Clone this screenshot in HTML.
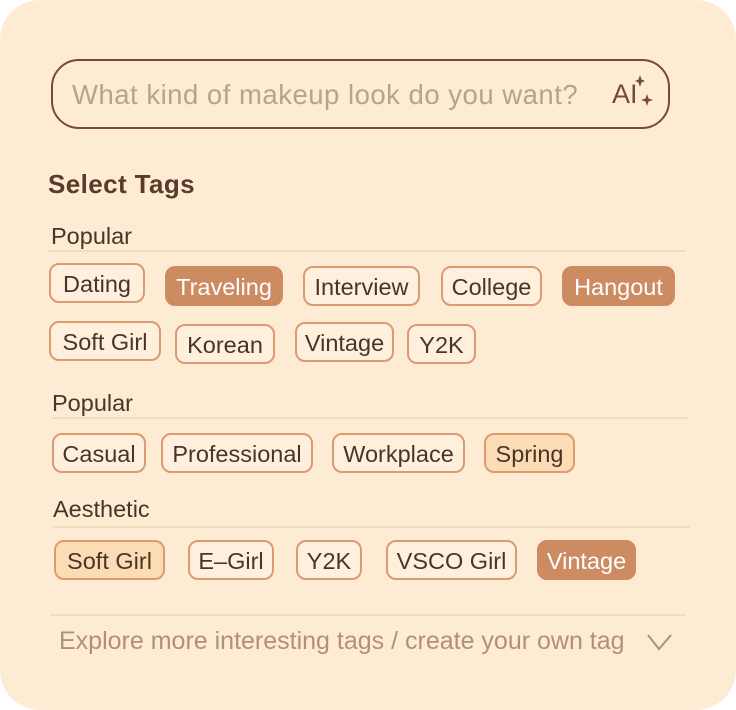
<!DOCTYPE html>
<html><head><style>
*{margin:0;padding:0;box-sizing:border-box}
body{width:736px;height:710px;background:#fff;overflow:hidden;font-family:"Liberation Sans",sans-serif}
.card{position:absolute;left:0;top:0;width:736px;height:710px;background:#feebd4;border-radius:40px}
.abs{position:absolute}
.inp{left:51px;top:59px;width:619px;height:70px;border:2px solid #7a4a30;border-radius:28px}
.ph{left:72px;top:79px;font-size:27.5px;letter-spacing:0.5px;color:#b5a38e;white-space:nowrap}
.ai{left:612px;top:79px;font-size:27px;color:#7a4a30}
.h{left:48px;top:169px;font-size:26px;letter-spacing:0.4px;font-weight:bold;color:#5a3a28}
.lab{font-size:23.5px;color:#4a3426}
.line{height:2px;background:#f5dcbf}
.t{position:absolute;height:40px;border:2px solid #dc9a70;border-radius:10px;font-size:23.5px;color:#4a3426;display:flex;align-items:center;justify-content:center;white-space:nowrap;background:#fff0de;padding-top:2px}
.d{background:#cd8b62;border-color:#cd8b62;color:#fff}
.l{background:#fbdcb5}
.f{left:59px;top:627px;font-size:25px;color:#b38f78;white-space:nowrap}
</style></head><body><div class="card">
<div class="abs inp"></div>
<div class="abs ph">What kind of makeup look do you want?</div>
<div class="abs ai">AI</div>
<svg class="abs" style="left:630px;top:74px" width="28" height="36" viewBox="0 0 28 36"><path d="M10 1 L11.5 5.5 L15 7 L11.5 8.5 L10 13 L8.5 8.5 L5 7 L8.5 5.5Z M17 20 L18.5 24.5 L23 26 L18.5 27.5 L17 32 L15.5 27.5 L11 26 L15.5 24.5Z" fill="#7a4a30"/></svg>
<div class="abs h">Select Tags</div>
<div class="abs lab" style="left:51px;top:223px">Popular</div>
<div class="abs line" style="left:48px;top:250px;width:638px"></div>
<div class="t" style="left:49px;top:263px;width:96px">Dating</div>
<div class="t d" style="left:165px;top:266px;width:118px">Traveling</div>
<div class="t" style="left:303px;top:266px;width:117px">Interview</div>
<div class="t" style="left:441px;top:266px;width:101px">College</div>
<div class="t d" style="left:562px;top:266px;width:113px">Hangout</div>
<div class="t" style="left:49px;top:321px;width:112px">Soft Girl</div>
<div class="t" style="left:175px;top:324px;width:100px">Korean</div>
<div class="t" style="left:295px;top:322px;width:99px">Vintage</div>
<div class="t" style="left:407px;top:324px;width:69px">Y2K</div>
<div class="abs lab" style="left:52px;top:390px">Popular</div>
<div class="abs line" style="left:52px;top:417px;width:636px"></div>
<div class="t" style="left:52px;top:433px;width:94px">Casual</div>
<div class="t" style="left:161px;top:433px;width:152px">Professional</div>
<div class="t" style="left:332px;top:433px;width:133px">Workplace</div>
<div class="t l" style="left:484px;top:433px;width:91px">Spring</div>
<div class="abs lab" style="left:53px;top:496px">Aesthetic</div>
<div class="abs line" style="left:53px;top:526px;width:637px"></div>
<div class="t l" style="left:54px;top:540px;width:111px">Soft Girl</div>
<div class="t" style="left:188px;top:540px;width:86px">E–Girl</div>
<div class="t" style="left:296px;top:540px;width:66px">Y2K</div>
<div class="t" style="left:386px;top:540px;width:131px">VSCO Girl</div>
<div class="t d" style="left:537px;top:540px;width:99px">Vintage</div>
<div class="abs line" style="left:50px;top:614px;width:636px"></div>
<div class="abs f">Explore more interesting tags / create your own tag</div>
<svg class="abs" style="left:646px;top:632px" width="28" height="20" viewBox="0 0 28 20"><path d="M2 3 L13 17 L25 3" fill="none" stroke="#b38f78" stroke-width="2"/></svg>
</div></body></html>
